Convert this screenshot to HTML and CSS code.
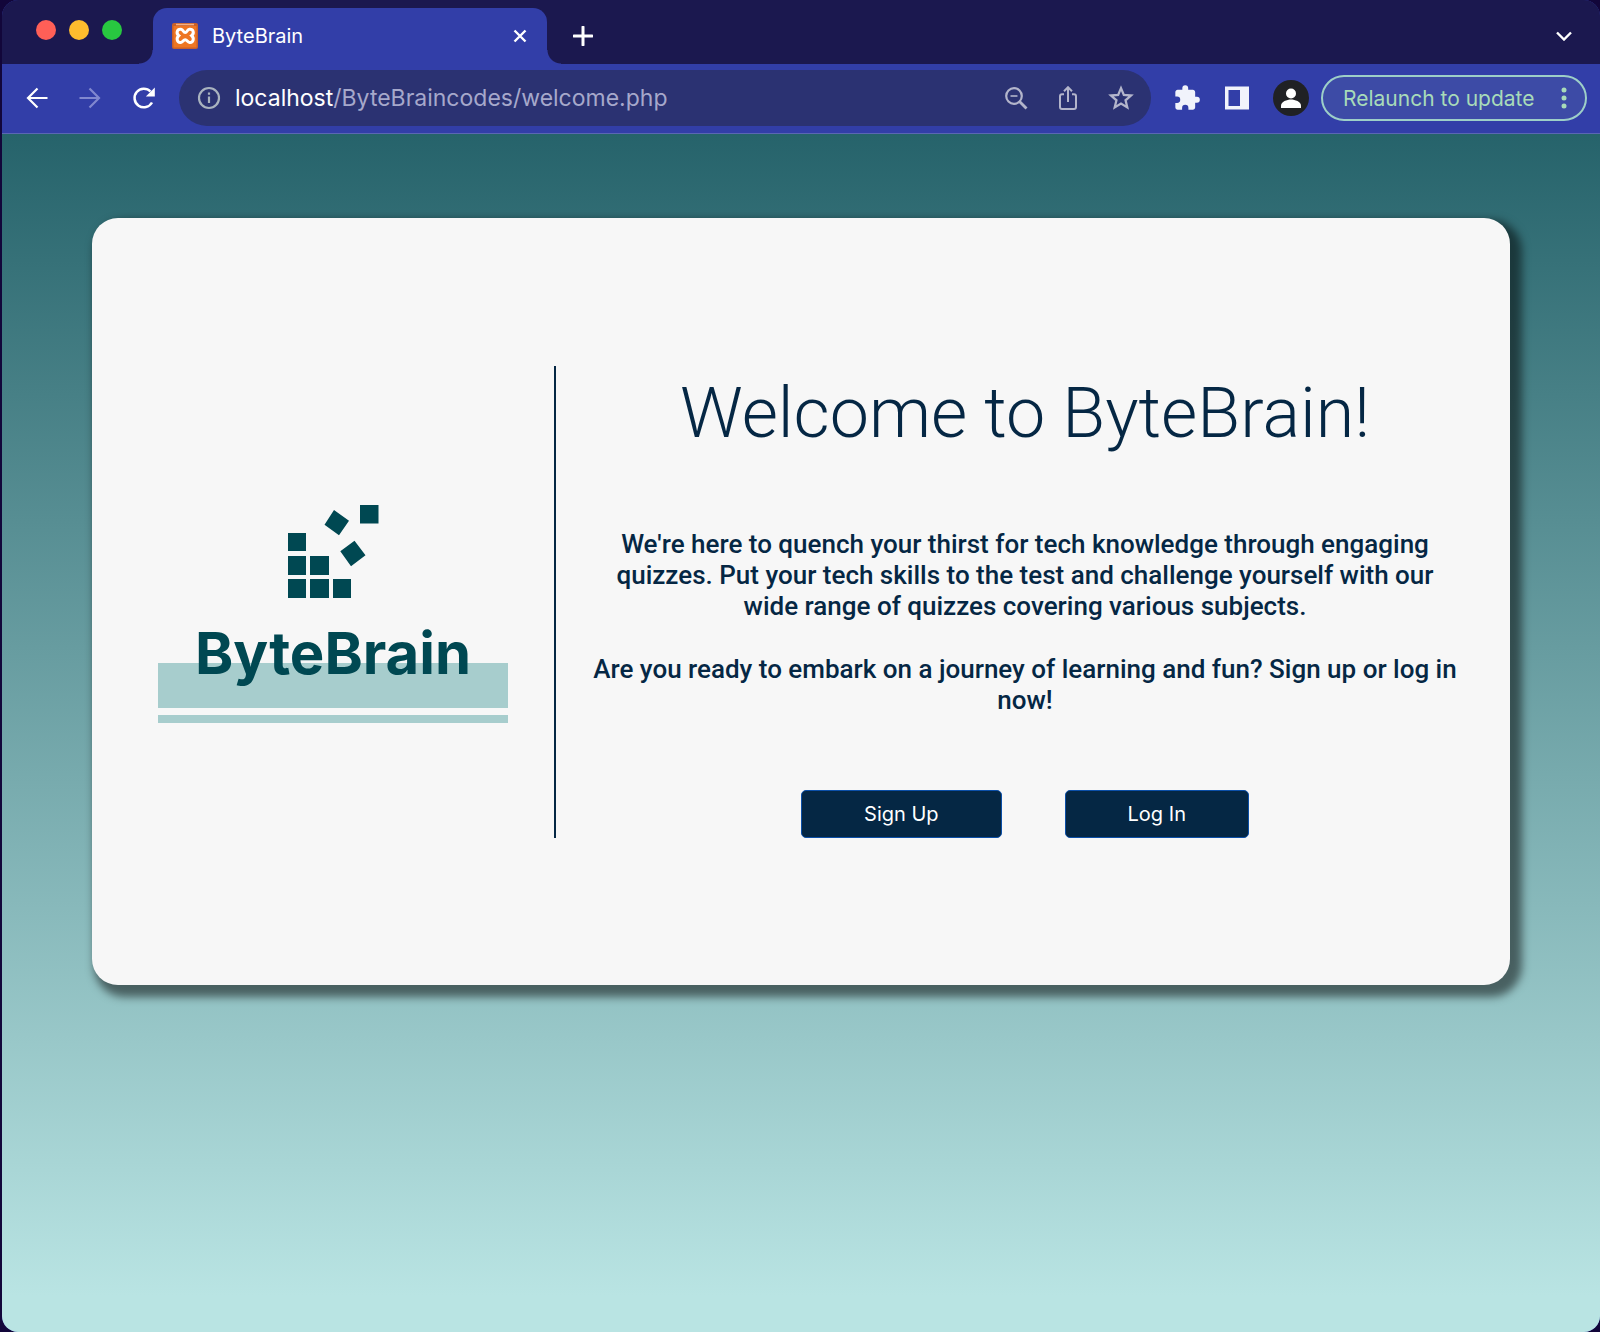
FILE: index.html
```
<!DOCTYPE html>
<html lang="en">
<head>
<meta charset="utf-8">
<title>ByteBrain</title>
<link rel="stylesheet" href="styles.css">
</head>
<body>
<div class="window">
  <header class="tabstrip">
    <div class="lights">
      <button class="light light-close" aria-label="Close window"></button>
      <button class="light light-min" aria-label="Minimize window"></button>
      <button class="light light-max" aria-label="Zoom window"></button>
    </div>
    <div class="tab">
      <svg class="favicon" viewBox="0 0 26 26" aria-hidden="true">
        <rect width="26" height="26" rx="2" fill="#c8602a"/>
        <rect x="1.500" y="3" width="23" height="21.500" fill="#ee7623"/>
        <path d="M4 1.500h18" stroke="#f3b184" stroke-width="1.500"/>
        <path d="M9 6.200C5 5.800 3.800 10.300 6.800 12.600 3.900 15.200 5 19.800 8.800 19.400c2.300-.2 2.300-2.600 4.400-2.600s2.100 2.400 4.400 2.600c3.800.4 4.900-4.200 2-6.800 3-2.300 1.800-6.800-2.200-6.400-2.300.2-2.200 3.300-4.200 3.300S11.300 6.400 9 6.200z" fill="none" stroke="#fff" stroke-width="3"/>
      </svg>
      <span class="tab-title">ByteBrain</span>
      <button class="icon-btn" aria-label="Close tab">
        <svg width="14" height="14" viewBox="0 0 14 14"><path d="M1.500 1.500l11 11M12.500 1.500l-11 11" stroke="#fff" stroke-width="2.400"/></svg>
      </button>
    </div>
    <button class="icon-btn new-tab" aria-label="New tab">
      <svg width="20" height="20" viewBox="0 0 20 20"><path d="M10 1v18M1 10h18" stroke="#fff" stroke-width="3" stroke-linecap="round"/></svg>
    </button>
    <button class="icon-btn tab-search" aria-label="Search tabs">
      <svg width="16" height="10" viewBox="0 0 16 10"><path d="M1 1.500L8 8.500l7-7" fill="none" stroke="#fff" stroke-width="2.400"/></svg>
    </button>
  </header>

  <nav class="toolbar" aria-label="Browser toolbar">
    <div class="nav-buttons">
      <button class="icon-btn" aria-label="Back">
        <svg width="22" height="22" viewBox="0 0 22 22"><path d="M11.500 1.500L2 11l9.500 9.500M2 11h19.500" fill="none" stroke="#fff" stroke-width="2.200"/></svg>
      </button>
      <button class="icon-btn" aria-label="Forward">
        <svg width="22" height="22" viewBox="0 0 22 22"><path d="M10.500 1.500L20 11l-9.500 9.500M20 11H.5" fill="none" stroke="#8188cf" stroke-width="2.200"/></svg>
      </button>
      <button class="icon-btn" aria-label="Reload">
        <svg width="24" height="24" viewBox="0 0 24 24"><path d="M20 16.500A9.300 9.300 0 1 1 18.500 5.500" fill="none" stroke="#fff" stroke-width="2.500"/><path d="M22.800 1.500v9H13.800z" fill="#fff"/></svg>
      </button>
    </div>
    <div class="omnibox">
      <svg width="24" height="24" viewBox="0 0 24 24" aria-hidden="true"><circle cx="12" cy="12" r="10" fill="none" stroke="#a9b3bf" stroke-width="2.200"/><path d="M12 10.500v6.500M12 6.500v2.300" stroke="#a9b3bf" stroke-width="2.200"/></svg>
      <div class="url"><span class="url-host">localhost</span>/ByteBraincodes/welcome.php</div>
      <div class="omni-actions">
        <button class="icon-btn" aria-label="Zoom">
          <svg width="24" height="24" viewBox="0 0 24 24"><circle cx="10" cy="10" r="7.800" fill="none" stroke="#b3b5cb" stroke-width="2.200"/><path d="M15.500 15.500l7 7" stroke="#b3b5cb" stroke-width="2.800"/><path d="M6.500 10h7" stroke="#b3b5cb" stroke-width="1.600"/></svg>
        </button>
        <button class="icon-btn" aria-label="Share">
          <svg width="24" height="24" viewBox="0 0 24 24"><path d="M8 8.300H6a2 2 0 0 0-2 2V21a2 2 0 0 0 2 2h12a2 2 0 0 0 2-2V10.300a2 2 0 0 0-2-2h-2M12 16V1.500M8 5.200l4-4 4 4" fill="none" stroke="#b3b5cb" stroke-width="2"/></svg>
        </button>
        <button class="icon-btn" aria-label="Bookmark this tab">
          <svg width="26" height="26" viewBox="0 0 24 24"><path d="M12 2.900l2.600 6.200 6.700.6-5.100 4.400 1.600 6.600-5.800-3.500-5.800 3.500 1.600-6.600L2.700 9.700l6.700-.6z" fill="none" stroke="#b3b5cb" stroke-width="2.100"/></svg>
        </button>
      </div>
    </div>
    <div class="tool-actions">
      <button class="icon-btn" aria-label="Extensions">
        <svg width="28" height="28" viewBox="0 0 24 24"><path d="M20.500 11H19V7c0-1.100-.9-2-2-2h-4V3.500a2.500 2.500 0 0 0-5 0V5H4c-1.100 0-2 .9-2 2v3.800h1.500a2.700 2.700 0 0 1 0 5.400H2V20c0 1.100.9 2 2 2h3.800v-1.500a2.700 2.700 0 0 1 5.400 0V22H17c1.100 0 2-.9 2-2v-4h1.500a2.500 2.500 0 0 0 0-5z" fill="#f1f3fb"/></svg>
      </button>
      <button class="icon-btn" aria-label="Side panel">
        <svg width="24" height="24" viewBox="0 0 24 24"><path fill-rule="evenodd" d="M0 .5h24v23H0zM3.500 4v16H15V4z" fill="#f1f3fb"/></svg>
      </button>
      <button class="icon-btn" aria-label="Profile">
        <svg width="36" height="36" viewBox="0 0 36 36"><circle cx="18" cy="18" r="18" fill="#202124"/><circle cx="18" cy="13.500" r="5" fill="#fff"/><path d="M8 28v-2.500c0-3.700 6-6 10-6s10 2.300 10 6V28z" fill="#fff"/></svg>
      </button>
    </div>
    <button class="relaunch">Relaunch to update
      <svg width="6" height="22" viewBox="0 0 6 22" aria-hidden="true"><g fill="#a8dbb9"><circle cx="3" cy="3" r="2.500"/><circle cx="3" cy="11" r="2.500"/><circle cx="3" cy="19" r="2.500"/></g></svg>
    </button>
  </nav>

  <main class="page">
    <section class="card">
      <div class="brand">
        <svg class="logo" viewBox="0 0 350 218" role="img" aria-label="ByteBrain logo">
          <g fill="#004852">
            <path d="M130 28h18v18h-18zM130 51h18v19h-18zM152 51h19v19h-19zM130 74h18v19h-18zM152 74h19v19h-19zM175 74h18v19h-18zM202 0h18.500v18.500H202z"/>
            <path d="M176 5l15 10.700-10 14.600L166.500 19.700zM196.500 35.700l11 14.600-14.500 11-10.700-15z"/>
          </g>
          <path d="M0 158h350v45H0zM0 210h350v8H0z" fill="#a7cdcd"/>
          <text class="logo-text" x="175" y="169" text-anchor="middle">ByteBrain</text>
        </svg>
      </div>
      <div class="intro">
        <h1>Welcome to ByteBrain!</h1>
        <p>We're here to quench your thirst for tech knowledge through engaging quizzes. Put your tech skills to the test and challenge yourself with our wide range of quizzes covering various subjects.</p>
        <p>Are you ready to embark on a journey of learning and fun? Sign up or log in now!</p>
        <div class="actions">
          <button class="btn">Sign Up</button>
          <button class="btn">Log In</button>
        </div>
      </div>
    </section>
  </main>
</div>
</body>
</html>
```
FILE: styles.css
```
* { box-sizing: border-box; }

body {
  margin: 0;
  background: #12063a;
  font-family: Inter, "Liberation Sans", sans-serif;
}

button {
  font-family: inherit;
  cursor: pointer;
}

.window {
  display: flex;
  flex-direction: column;
  min-height: 100vh;
  margin: 0 0 0 2px;
  border-radius: 16px;
  overflow: hidden;
  background: #323ea8;
}

.icon-btn {
  display: flex;
  padding: 0;
  border: 0;
  background: none;
}

/* Tab strip */
.tabstrip {
  display: flex;
  height: 64px;
  padding: 8px 28px 0 34px;
  background: #1b184f;
}

.lights {
  display: flex;
  gap: 13px;
  margin-right: 31px;
  padding-top: 12px;
}

.light {
  width: 20px;
  height: 20px;
  padding: 0;
  border: 0;
  border-radius: 50%;
}

.light-close { background: #ff5f57; }
.light-min { background: #febc2e; }
.light-max { background: #28c840; }

.tab {
  position: relative;
  display: flex;
  align-items: center;
  gap: 14px;
  width: 394px;
  padding: 0 20px 0 19px;
  border-radius: 14px 14px 0 0;
  background: #323ea8;
  color: #fff;
}

.tab::before,
.tab::after {
  content: "";
  position: absolute;
  bottom: 0;
  width: 14px;
  height: 14px;
}

.tab::before {
  right: 100%;
  background: radial-gradient(circle at 0 0, #1b184f 13px, #323ea8 14px);
}

.tab::after {
  left: 100%;
  background: radial-gradient(circle at 100% 0, #1b184f 13px, #323ea8 14px);
}

.favicon {
  width: 26px;
  height: 26px;
}

.tab-title {
  flex: 1;
  font-size: 20px;
}

.new-tab {
  align-items: center;
  margin-left: 26px;
}

.tab-search {
  align-items: center;
  margin-left: auto;
}

/* Toolbar */
.toolbar {
  display: flex;
  align-items: center;
  height: 70px;
  padding: 0 13px 1px 24px;
  border-bottom: 1px solid #5a66b4;
}

.nav-buttons {
  display: flex;
  align-items: center;
  gap: 31px;
  margin-right: 23px;
}

.omnibox {
  display: flex;
  flex: 1;
  align-items: center;
  height: 56px;
  padding: 0 17px 0 18px;
  border-radius: 28px;
  background: #2b3272;
}

.url {
  flex: 1;
  margin-left: 14px;
  font-size: 23px;
  color: #a6a8cb;
}

.url-host { color: #fff; }

.omni-actions {
  display: flex;
  align-items: center;
  gap: 28px;
}

.tool-actions {
  display: flex;
  align-items: center;
  gap: 24px;
  margin: 0 12px 0 22px;
}

.relaunch {
  display: flex;
  align-items: center;
  justify-content: space-between;
  width: 266px;
  height: 46px;
  padding: 0 18px 0 20px;
  border: 2px solid #9dcfc8;
  border-radius: 23px;
  background: #3d4ba6;
  color: #a8dbb9;
  font-size: 21px;
}

/* Page */
.page {
  flex: 1;
  padding: 84px 90px 96px;
  background: linear-gradient(#26636b, #b9e4e3 97%);
}

.card {
  display: grid;
  grid-template-columns: 462fr 956fr;
  padding: 148px 0 147px;
  border-radius: 26px;
  background: #f7f7f7;
  box-shadow: 7px 7px 8px 5px rgba(0, 0, 0, 0.5);
}

.brand {
  display: flex;
  align-items: center;
  padding: 24px 46px 0 66px;
}

.logo {
  width: 100%;
}

.logo-text {
  fill: #004852;
  font-size: 58px;
  font-weight: 700;
}

.intro {
  padding: 0 48px 0 32px;
  border-left: 2px solid #052744;
  color: #052744;
  font-family: Roboto, "Liberation Sans", sans-serif;
  text-align: center;
}

h1 {
  margin: 0 0 69px;
  font-size: 70px;
  font-weight: 300;
  line-height: 94px;
}

p {
  margin: 0 0 32px;
  font-size: 26px;
  font-weight: 500;
  line-height: 31px;
}

.actions {
  display: flex;
  justify-content: center;
  gap: 63px;
  margin-top: 74px;
  font-family: Inter, "Liberation Sans", sans-serif;
}

.btn {
  height: 48px;
  padding: 0 62px;
  border: 1px solid #0b4fa8;
  border-radius: 5px;
  background: #052744;
  color: #fff;
  font-size: 20px;
}
```
